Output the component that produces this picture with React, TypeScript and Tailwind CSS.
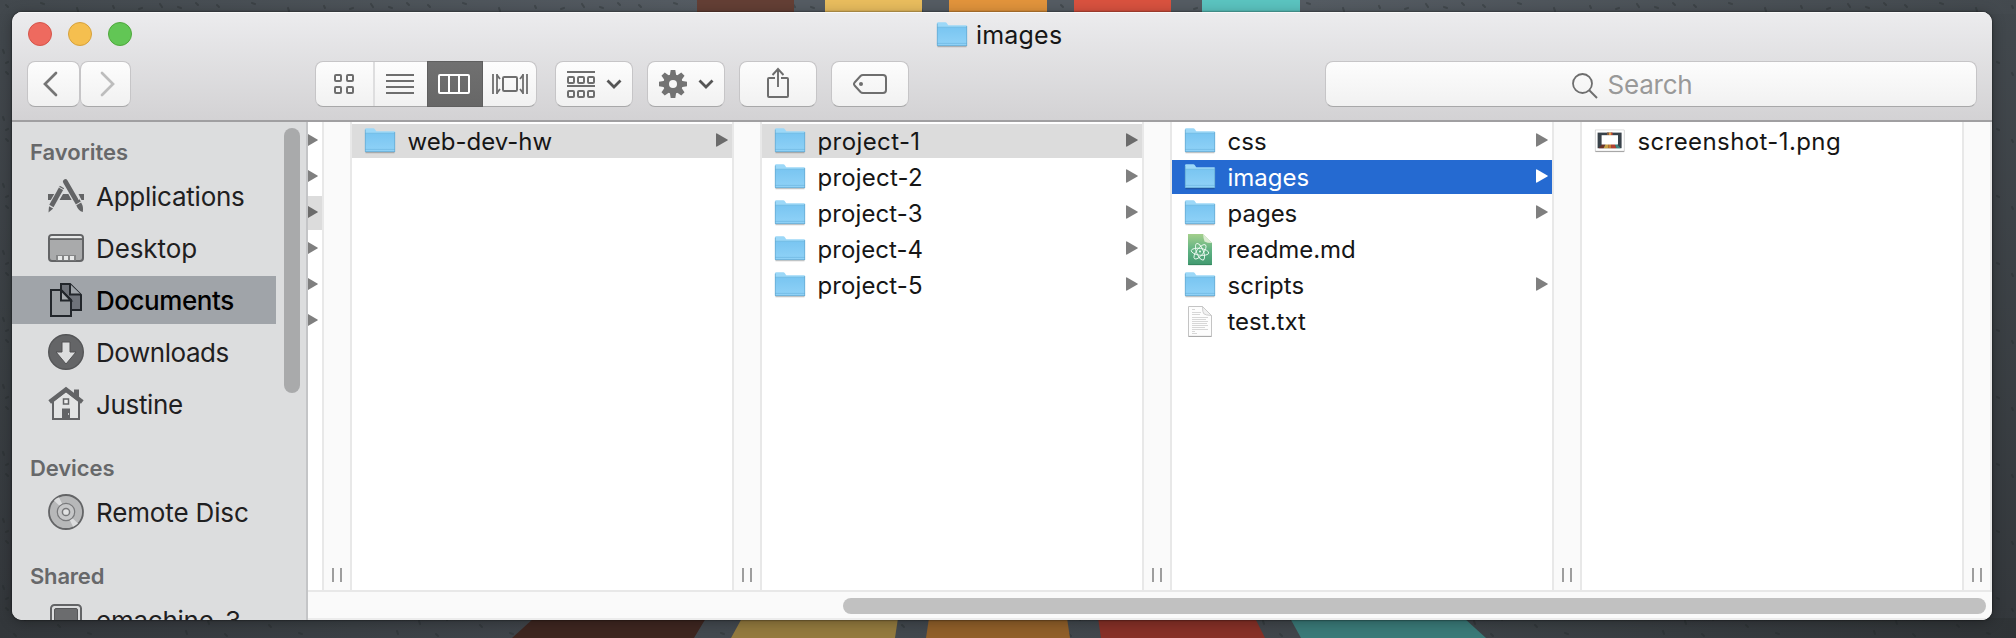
import React from "react";

const ARROW_PATH = "M0 1 Q0 0 1 .4 L11.4 6.4 Q12.3 7 11.4 7.6 L1 13.6 Q0 14 0 13 Z";

function Folder() {
  return (
    <svg width="32" height="26" viewBox="0 0 32 26" className="block shrink-0">
      <defs>
        <linearGradient id="folderFront" x1="0" y1="0" x2="0" y2="1">
          <stop offset="0" stopColor="#79c5f1" />
          <stop offset="1" stopColor="#90d2f7" />
        </linearGradient>
      </defs>
      <path d="M1.5 24.5h29" stroke="#000" strokeOpacity=".22" strokeWidth="1.6" />
      <path d="M1 1.6Q1 .3 2.2.3h7.2q.8 0 1.3.7l1.2 1.8q.4.5 1.1.5h17q1 0 1 1V23q0 .9-.9.9H1.9Q1 23.9 1 23z" fill="#9cd8f8" />
      <path d="M1 5.2h30V23q0 .9-.9.9H1.9Q1 23.9 1 23z" fill="url(#folderFront)" />
      <path d="M1 5.2h30M1 21.4h30" stroke="#68b1dc" strokeWidth=".6" />
      <path d="M1.3 1.6v22M30.7 4v20M1 23.6h30" stroke="#61a5cd" strokeWidth=".7" fill="none" />
    </svg>
  );
}

function MarkdownFile() {
  return (
    <svg width="32" height="34" viewBox="0 0 32 34" className="block shrink-0">
      <defs>
        <linearGradient id="mdPage" x1="0" y1="0" x2="0" y2="1">
          <stop offset="0" stopColor="#a3cf8c" />
          <stop offset=".5" stopColor="#62b384" />
          <stop offset="1" stopColor="#419a70" />
        </linearGradient>
      </defs>
      <path d="M4 2h15l9 9v22H4z" fill="url(#mdPage)" />
      <path d="M19 2l9 9q-5 0-7.500-1.500Q19.500 7 19 2z" fill="#dcebd3" />
      <path d="M4.500 32.700h23" stroke="#317a55" strokeWidth=".7" />
      <g fill="none" stroke="#effaf2" strokeWidth=".9">
        <ellipse cx="16" cy="19.800" rx="8.800" ry="3.400" transform="rotate(8 16 19.800)" />
        <ellipse cx="16" cy="19.800" rx="8.800" ry="3.400" transform="rotate(68 16 19.800)" />
        <ellipse cx="16" cy="19.800" rx="8.800" ry="3.400" transform="rotate(128 16 19.800)" />
      </g>
      <circle cx="16" cy="19.600" r="1" fill="#effaf2" />
    </svg>
  );
}

function TextFile() {
  return (
    <svg width="32" height="34" viewBox="0 0 32 34" className="block shrink-0">
      <path d="M4.500 2.500h14l9 9v20.800h-23z" fill="#fdfdfd" stroke="#c4c4c4" />
      <path d="M4.500 32.500h23" stroke="#aaa" />
      <path d="M18.500 2.500q0 6 1.300 7.300t7.700 1.700z" fill="#f1f1f1" stroke="#c4c4c4" strokeWidth=".8" />
      <path d="M8 5.500h3M8 8.500h9M8 10.500h8M8 13.500h16M8 15.500h14M8 17.500h16M8 19.500h15M8 21.500h16M8 23.500h13M8 25.500h16M8 27.500h3M8 29.500h5" stroke="#d2d2d2" strokeWidth=".9" />
    </svg>
  );
}

function ImageFile() {
  return (
    <svg width="32" height="26" viewBox="0 0 32 26" className="block shrink-0">
      <rect x=".8" y="1.800" width="30" height="22.400" rx="1" fill="#000" fillOpacity=".13" />
      <rect x="1.500" y="22" width="28.600" height="2" fill="#000" fillOpacity=".3" />
      <rect x="1.500" y="2" width="28.600" height="21" fill="#fff" stroke="#ccc" strokeWidth=".5" />
      <rect x="3.600" y="4.600" width="24" height="15.600" fill="#39424a" />
      <path d="M13 4.600h2v3h-2z" fill="#8a5b3c" />
      <path d="M15 4.600h2v3h-2z" fill="#e0a245" />
      <path d="M17 4.600h1.500v3H17z" fill="#c94a35" />
      <path d="M4.600 20.200l4-4.200h2.500l-1.500 4.200z" fill="#6b3228" />
      <path d="M9.600 20.200l2-4.200h2.800v4.200z" fill="#c9a044" />
      <path d="M14.400 16h3v4.200h-3z" fill="#cc7a31" />
      <path d="M17.400 16h3.400l1.600 4.200h-5z" fill="#b5402f" />
      <path d="M20.800 16h2l3.800 4.200h-4.200z" fill="#3f8580" />
      <rect x="7.600" y="7.200" width="16.400" height="9.300" fill="#fff" />
    </svg>
  );
}

type Kind = "folder" | "md" | "txt" | "png";
type Entry = { name: string; kind: Kind; state?: "trail" | "selected"; spacing?: string };

const columns: Entry[][] = [
  [{ name: "web-dev-hw", kind: "folder", state: "trail" }],
  [
    { name: "project-1", kind: "folder", state: "trail", spacing: "tracking-[0.4px]" },
    { name: "project-2", kind: "folder", spacing: "tracking-[0.2px]" },
    { name: "project-3", kind: "folder", spacing: "tracking-[0.1px]" },
    { name: "project-4", kind: "folder", spacing: "tracking-[0.05px]" },
    { name: "project-5", kind: "folder", spacing: "tracking-[0.1px]" },
  ],
  [
    { name: "css", kind: "folder" },
    { name: "images", kind: "folder", state: "selected" },
    { name: "pages", kind: "folder" },
    { name: "readme.md", kind: "md", spacing: "tracking-[-0.05px]" },
    { name: "scripts", kind: "folder" },
    { name: "test.txt", kind: "txt" },
  ],
  [{ name: "screenshot-1.png", kind: "png", spacing: "tracking-[0.4px]" }],
];

function FileIcon({ kind }: { kind: Kind }) {
  if (kind === "md") return <MarkdownFile />;
  if (kind === "txt") return <TextFile />;
  if (kind === "png") return <ImageFile />;
  return <Folder />;
}

function Arrow({ className }: { className: string }) {
  return (
    <svg width="12" height="14" viewBox="0 0 12 14" className={`block shrink-0 ${className}`}>
      <path d={ARROW_PATH} fill="currentColor" />
    </svg>
  );
}

function Row({ entry }: { entry: Entry }) {
  const bg = entry.state === "selected" ? "bg-[#256ad1] text-white" : entry.state === "trail" ? "bg-[#dcdcdc] text-[#161616]" : "text-[#161616]";
  const arrow = entry.state === "selected" ? "text-white" : entry.state === "trail" ? "text-[#6b6b6b]" : "text-[#7f7f7f]";
  return (
    <div className={`flex h-[34px] items-center pr-1 pl-3 ${bg}`}>
      <div className="flex h-[34px] w-8 shrink-0 items-center pb-px">
        <FileIcon kind={entry.kind} />
      </div>
      <span className={`ml-[11.5px] grow pt-0.5 text-[24px] leading-[34px] whitespace-nowrap ${entry.spacing ?? ""}`}>{entry.name}</span>
      {entry.kind === "folder" && <Arrow className={`mb-0.5 ${arrow}`} />}
    </div>
  );
}

function Divider() {
  return (
    <div className="flex w-[30px] shrink-0 items-end justify-center gap-[6px] border-x-2 border-[#e8e8e8] bg-[#fafafa] pb-2">
      <div className="h-[14px] w-0.5 bg-[#9d9d9d]" />
      <div className="h-[14px] w-0.5 bg-[#9d9d9d]" />
    </div>
  );
}

const sideIcon = "block shrink-0";

function ApplicationsIcon() {
  return (
    <svg width="36" height="36" viewBox="0 0 36 36" className={sideIcon}>
      <path d="M0 16h7.500l-3 6H0zM30.500 16H36v6h-2.500zM15 16h6l3 6H11.500z" fill="#636466" />
      <path d="M14.200 9L3.500 28" stroke="#dcddde" strokeWidth="7" />
      <path d="M14 9L3.400 28" stroke="#636466" strokeWidth="4.800" />
      <path d="M1 28.200l4.200 2.200L.5 34.500z" fill="#636466" />
      <path d="M17.300 3.500L29.500 25" stroke="#dcddde" strokeWidth="7" />
      <path d="M17.300 3.500L28 22" stroke="#636466" strokeWidth="4.800" strokeLinecap="round" />
      <path d="M26.500 24l5-2.800 1.300 2.400-5 2.800z" fill="#636466" />
      <path d="M28.300 27.300l4.800-2.700q2.700 4.400 1.700 9.400-4.500-1-6.500-6.700z" fill="#636466" />
      <path d="M11.200 9.400l5 2.700" stroke="#dcddde" strokeWidth="1" />
    </svg>
  );
}

function DesktopIcon() {
  return (
    <svg width="36" height="36" viewBox="0 0 36 36" className={sideIcon}>
      <rect x="1" y="5" width="34" height="26" rx="3" fill="#a9aaab" stroke="#636466" strokeWidth="2" />
      <path d="M2 8.200V8q0-2 2-2h28q2 0 2 2v.2z" fill="#e8e9e9" />
      <path d="M1 9.200h34" stroke="#636466" strokeWidth="1.800" />
      <rect x="8" y="25" width="20" height="5.500" fill="#858687" />
      <path d="M10 26h4v4h-4zM16 26h4v4h-4zM22 26h4v4h-4z" fill="#e8e9e9" />
    </svg>
  );
}

function DocumentsIcon() {
  return (
    <svg width="36" height="36" viewBox="0 0 36 36" className={sideIcon}>
      <path d="M13 2h9l11 11v15H13z" fill="#6f737a" stroke="#22262b" strokeWidth="2" />
      <path d="M22 2v10.500h11" fill="#9ea3a8" stroke="#22262b" strokeWidth="2" />
      <path d="M3 8h10l10 10v16H3z" fill="#999da1" stroke="#22262b" strokeWidth="2" />
      <path d="M13 8v10.500h10z" fill="#a7abaf" stroke="#22262b" strokeWidth="2" />
    </svg>
  );
}

function DownloadsIcon() {
  return (
    <svg width="36" height="36" viewBox="0 0 36 36" className={sideIcon}>
      <circle cx="18" cy="18" r="17.300" fill="#646567" stroke="#545557" strokeWidth="1.400" />
      <path d="M14 8h8v10h6L18 30 8 18h6z" fill="#dcddde" stroke="#505153" strokeWidth="1" />
    </svg>
  );
}

function HomeIcon() {
  return (
    <svg width="36" height="36" viewBox="0 0 36 36" className={sideIcon}>
      <path d="M5 15v18h26V15L18 5z" fill="#e3e4e4" stroke="#636466" strokeWidth="2" />
      <path d="M26 3.500h5v10l-5-4z" fill="#636466" />
      <path d="M1.700 16L18 3.500 34.300 16" fill="none" stroke="#636466" strokeWidth="4.400" />
      <rect x="15.500" y="13" width="5" height="5" fill="#eee" stroke="#636466" strokeWidth="1.500" />
      <path d="M14 22.500h8V34h-8z" fill="#636466" />
      <path d="M20.500 27v2" stroke="#ddd" strokeWidth=".8" />
    </svg>
  );
}

function DiscIcon() {
  return (
    <svg width="36" height="36" viewBox="0 0 36 36" className={sideIcon}>
      <circle cx="18" cy="18" r="17" fill="#b7b8b9" stroke="#636466" strokeWidth="1.800" />
      <path d="M18 18L6 6.500a16 16 0 0 1 5-3.200zM18 18l12 11.500a16 16 0 0 1-5 3.200z" fill="#dcddde" />
      <circle cx="18" cy="18" r="8.700" fill="#c6c7c8" stroke="#77787a" strokeWidth="1.200" />
      <circle cx="18" cy="18" r="3.600" fill="#e2e3e3" stroke="#77787a" strokeWidth="1.500" />
    </svg>
  );
}

function ComputerIcon() {
  return (
    <svg width="36" height="36" viewBox="0 0 36 36" className={sideIcon}>
      <rect x="3" y="3" width="30" height="30" rx="3.500" fill="#dcddde" stroke="#636466" strokeWidth="2" />
      <rect x="6.500" y="6.500" width="23" height="22" rx="1.500" fill="#6b6c6e" stroke="#555658" />
    </svg>
  );
}

function SideItem({ icon, label, active, spacing }: { icon: React.ReactNode; label: string; active?: boolean; spacing: string }) {
  return (
    <div className={`flex h-[48px] w-[264px] shrink-0 items-center pl-9 text-[26px] whitespace-nowrap ${active ? "bg-[#a0a4a9] font-medium text-black" : "text-[#1f2021]"}`}>
      {icon}
      <span className={`ml-3 ${spacing}`}>{label}</span>
    </div>
  );
}

function SideHeading({ children, className }: { children: React.ReactNode; className: string }) {
  return <div className={`shrink-0 pl-[18px] text-[22px] leading-[28px] font-semibold whitespace-nowrap text-[#67686a] ${className}`}>{children}</div>;
}

const button = "flex shrink-0 items-center justify-center rounded-[8px] border border-[#c6c5c7] border-b-[#a8a8a9] bg-linear-to-b from-[#fdfdfd] to-[#f1f1f1]";

function Chevron() {
  return (
    <svg width="16" height="10" viewBox="0 0 16 10" className="block">
      <path d="M1.500 1.500L8 8l6.500-6.500" fill="none" stroke="#555" strokeWidth="2.800" />
    </svg>
  );
}

function GearIcon() {
  return (
    <svg width="28" height="28" viewBox="-14 -14 28 28" className="block">
      <g fill="#737373">
        {[0, 45, 90, 135].map((a) => (
          <path key={a} d="M-2.300-14h4.600l1 6v16l-1 6h-4.600l-1-6V-8z" transform={`rotate(${a})`} />
        ))}
        <circle r="9.800" />
      </g>
      <circle r="4" fill="#f7f7f7" />
    </svg>
  );
}

const lights = ["bg-[#ee6a5f] border-[#d5544a]", "bg-[#f5bf4f] border-[#d6a13c]", "bg-[#62c655] border-[#4fa73c]"];

export default function App() {
  return (
    <div className="relative h-[638px] w-[2016px] overflow-hidden bg-[#3d4247] p-3 font-['Inter','Liberation_Sans',sans-serif]">
      <svg width="2016" height="638" viewBox="0 0 2016 638" className="absolute top-0 left-0">
        <defs>
          <linearGradient id="deskTop" x1="0" y1="0" x2="1" y2="0">
            <stop offset="0" stopColor="#42484d" />
            <stop offset=".35" stopColor="#555c63" />
            <stop offset=".65" stopColor="#555c63" />
            <stop offset="1" stopColor="#43494e" />
          </linearGradient>
          <linearGradient id="deskBottom" x1="0" y1="0" x2="1" y2="0">
            <stop offset="0" stopColor="#33373b" />
            <stop offset=".35" stopColor="#43494f" />
            <stop offset=".65" stopColor="#40464b" />
            <stop offset="1" stopColor="#2f3336" />
          </linearGradient>
          <linearGradient id="deskSide" x1="0" y1="0" x2="0" y2="1">
            <stop offset="0" stopColor="#42484d" />
            <stop offset="1" stopColor="#33373b" />
          </linearGradient>
          <pattern id="specks" width="211" height="67" patternUnits="userSpaceOnUse">
            <path d="M6 5l2 2M24 14l1 3M41 3l3 1M58 22l2 2M77 8l1 3M88 30l3 1M14 31l2 2M35 53l1 3M66 36l2 1M3 50l1 3M113 6l1 2M127 40l2 1M139 9l3-1M152 55l1 3M160 4l2 3M178 7l3 1M186 28l1 3M196 3l2 2M203 47l2 2M208 18l1 3M6 63l2-1M98 62l2 1" stroke="#1f2326" strokeOpacity=".3" strokeWidth="2.200" strokeLinecap="round" />
          </pattern>
        </defs>
        <rect width="2016" height="638" fill="url(#deskSide)" />
        <rect width="2016" height="14" fill="url(#deskTop)" />
        <rect y="618" width="2016" height="20" fill="url(#deskBottom)" />
        <rect width="2016" height="638" fill="url(#specks)" />
        <path d="M697 0h97v14h-97z" fill="#643f35" />
        <path d="M825 0h97v14h-97z" fill="#e9bd5e" />
        <path d="M949 0h98v14h-98z" fill="#e2943c" />
        <path d="M1074 0h97v14h-97z" fill="#d9523f" />
        <path d="M1202 0h98v14h-98z" fill="#5bc4c0" />
        <path d="M534 618h172l-12 20H512z" fill="#3e2620" />
        <path d="M742 618h156l-3 20H731z" fill="#937a3e" />
        <path d="M929 618h138l3 20H926z" fill="#905f29" />
        <path d="M1098 618h157l10 20h-164z" fill="#873027" />
        <path d="M1290 618h174l22 20h-185z" fill="#3a7a78" />
      </svg>

      <div className="relative flex h-[608px] w-[1980px] flex-col overflow-hidden rounded-[10px] bg-white shadow-[0_0_2px_rgba(0,0,0,0.8),0_2px_14px_rgba(0,0,0,0.3)]">
        <header className="flex h-[110px] shrink-0 flex-col border-b-2 border-b-[#a09fa1] bg-linear-to-b from-[#ececee] to-[#d3d2d4] shadow-[inset_0_1px_0_#f8f8f8]">
          <div className="flex h-[49px] shrink-0 items-center px-4">
            <div className="flex w-[400px] gap-4 pb-[5px]">
              {lights.map((c) => (
                <div key={c} className={`size-6 rounded-full border ${c}`} />
              ))}
            </div>
            <div className="ml-[508px] flex items-center gap-2 pb-1">
              <Folder />
              <span className="text-[25px] leading-[34px] tracking-[0.2px] text-[#161616]">images</span>
            </div>
          </div>
          <div className="flex h-[46px] shrink-0 pl-[15px]">
            <div className={`h-[46px] w-[53px] ${button}`}>
              <svg width="16" height="26" viewBox="0 0 16 26" className="-ml-2 block">
                <path d="M14 2L3 13l11 11" fill="none" stroke="#757575" strokeWidth="2.700" strokeLinecap="round" />
              </svg>
            </div>
            <div className={`h-[46px] w-[51px] ${button}`}>
              <svg width="16" height="26" viewBox="0 0 16 26" className="ml-1 block">
                <path d="M2 2l11 11L2 24" fill="none" stroke="#bdbdbd" strokeWidth="2.700" strokeLinecap="round" />
              </svg>
            </div>
            <div className={`ml-[184px] h-[46px] w-[222px] ${button}`}>
              <div className="flex h-full w-[59px] shrink-0 items-center justify-center border-r-2 border-[#dededf] pr-px">
                <svg width="20" height="20" viewBox="0 0 20 20">
                  <g fill="none" stroke="#6e6e6e" strokeWidth="2">
                    <rect x="1" y="1" width="6" height="6" rx="1" />
                    <rect x="13" y="1" width="6" height="6" rx="1" />
                    <rect x="1" y="13" width="6" height="6" rx="1" />
                    <rect x="13" y="13" width="6" height="6" rx="1" />
                  </g>
                </svg>
              </div>
              <div className="flex h-full w-[52px] shrink-0 items-center justify-center pr-0.5">
                <svg width="28" height="20" viewBox="0 0 28 20">
                  <path d="M0 1h28M0 7h28M0 13h28M0 19h28" stroke="#6e6e6e" strokeWidth="2" />
                </svg>
              </div>
              <div className="flex h-[46px] w-[56px] shrink-0 items-center justify-center border border-[#5f5f5f] bg-linear-to-b from-[#707070] to-[#676767] pr-0.5">
                <svg width="32" height="20" viewBox="0 0 32 20">
                  <path d="M2 1h28q1 0 1 1v16q0 1-1 1H2q-1 0-1-1V2q0-1 1-1zM11 1v18M21 1v18" fill="none" stroke="#fff" strokeWidth="2" />
                </svg>
              </div>
              <div className="flex h-full w-[53px] shrink-0 items-center justify-center">
                <svg width="36" height="20" viewBox="0 0 36 20">
                  <rect x="11" y="3" width="14" height="14" rx="1.200" fill="none" stroke="#6e6e6e" strokeWidth="2" />
                  <path d="M1 0v20M35 0v20" stroke="#6e6e6e" strokeWidth="1.800" />
                  <path d="M5 0v20M31 0v20" stroke="#6e6e6e" strokeWidth="1.800" />
                  <path d="M5 1l3 4M5 19l3-4M31 1l-3 4M31 19l-3-4" stroke="#6e6e6e" strokeWidth="1.800" />
                </svg>
              </div>
            </div>
            <div className={`ml-[18px] h-[46px] w-[78px] gap-[11px] pl-px ${button}`}>
              <svg width="28" height="27" viewBox="0 0 28 27">
                <path d="M0 1h28M0 15h28" stroke="#6e6e6e" strokeWidth="2" />
                <g fill="none" stroke="#6e6e6e" strokeWidth="2">
                  <rect x="1" y="6" width="6" height="6" rx="1" />
                  <rect x="11" y="6" width="6" height="6" rx="1" />
                  <rect x="21" y="6" width="6" height="6" rx="1" />
                  <rect x="1" y="20" width="6" height="6" rx="1" />
                  <rect x="11" y="20" width="6" height="6" rx="1" />
                  <rect x="21" y="20" width="6" height="6" rx="1" />
                </g>
              </svg>
              <Chevron />
            </div>
            <div className={`ml-[14px] h-[46px] w-[78px] gap-[11px] pl-px ${button}`}>
              <GearIcon />
              <Chevron />
            </div>
            <div className={`ml-[14px] h-[46px] w-[78px] ${button}`}>
              <svg width="22" height="32" viewBox="0 0 22 32" className="mb-[3px] block">
                <path d="M8 11H2q-1 0-1 1v17q0 1 1 1h18q1 0 1-1V12q0-1-1-1h-6" fill="none" stroke="#6e6e6e" strokeWidth="2" />
                <path d="M11 20V2M5.500 8L11 2l5.500 6" fill="none" stroke="#6e6e6e" strokeWidth="1.900" />
              </svg>
            </div>
            <div className={`ml-[14px] h-[46px] w-[78px] ${button}`}>
              <svg width="34" height="20" viewBox="0 0 34 20" className="block">
                <path d="M10 1h20q3 0 3 3v12q0 3-3 3H10q-1.500 0-2.500-1L1.600 11.500q-1.200-1.500 0-3L7.500 2Q8.500 1 10 1z" fill="none" stroke="#6e6e6e" strokeWidth="2" />
                <circle cx="8" cy="10" r="2" fill="#6e6e6e" />
              </svg>
            </div>
            <div className={`ml-[416px] h-[46px] w-[652px] pr-[37px] ${button}`}>
              <svg width="26" height="26" viewBox="0 0 26 26" className="mt-1 block">
                <circle cx="10.500" cy="10.500" r="9.500" fill="none" stroke="#6e6e6e" strokeWidth="1.800" />
                <path d="M17 17l8 8" stroke="#6e6e6e" strokeWidth="2" />
              </svg>
              <span className="ml-[9px] text-[26px] tracking-[-0.2px] text-[#999]">Search</span>
            </div>
          </div>
        </header>

        <div className="flex h-[498px]">
          <aside className="flex h-full w-[296px] shrink-0 overflow-hidden border-r-2 border-[#c4c5c7] bg-[#dcddde]">
            <nav className="flex w-[272px] shrink-0 flex-col">
              <SideHeading className="mt-4">Favorites</SideHeading>
              <div className="mt-[6px] flex flex-col gap-1">
                <SideItem icon={<ApplicationsIcon />} label="Applications" spacing="tracking-[-0.25px]" />
                <SideItem icon={<DesktopIcon />} label="Desktop" spacing="tracking-[-0.1px]" />
                <SideItem icon={<DocumentsIcon />} label="Documents" active spacing="tracking-[-0.45px]" />
                <SideItem icon={<DownloadsIcon />} label="Downloads" spacing="tracking-[-0.45px]" />
                <SideItem icon={<HomeIcon />} label="Justine" spacing="tracking-[-0.35px]" />
              </div>
              <SideHeading className="mt-[26px] tracking-[-0.1px]">Devices</SideHeading>
              <div className="mt-[6px]">
                <SideItem icon={<DiscIcon />} label="Remote Disc" spacing="tracking-[-0.15px]" />
              </div>
              <SideHeading className="mt-[26px] tracking-[-0.2px]">Shared</SideHeading>
              <div className="mt-[6px]">
                <SideItem icon={<ComputerIcon />} label="emachine-3" spacing="tracking-[-0.25px]" />
              </div>
            </nav>
            <div className="mt-[6px] h-[265px] w-4 shrink-0 rounded-full bg-[#a9aaab]" />
          </aside>

          <main className="flex min-w-0 grow flex-col">
            <div className="flex h-[468px] overflow-hidden">
              <div className="flex w-[14px] shrink-0 flex-col gap-0.5 pt-0.5">
                {[0, 1, 2, 3, 4, 5].map((i) => (
                  <div key={i} className={`flex h-[34px] items-center overflow-hidden ${i === 2 ? "bg-[#dcdcdc] text-[#6b6b6b]" : "text-[#7f7f7f]"}`}>
                    <Arrow className="mb-0.5 -ml-0.5" />
                  </div>
                ))}
              </div>
              <Divider />
              {columns.map((col, i) => (
                <React.Fragment key={i}>
                  <div className="flex w-[380px] shrink-0 flex-col gap-0.5 pt-0.5">
                    {col.map((e) => (
                      <Row key={e.name} entry={e} />
                    ))}
                  </div>
                  <Divider />
                </React.Fragment>
              ))}
            </div>
            <div className="flex h-[30px] shrink-0 items-center justify-end border-y-2 border-t-[#e8e8e8] border-b-[#ececec] bg-[#fafafa] pt-0.5 pr-[6px]">
              <div className="h-4 w-[1143px] rounded-full bg-[#c1c1c1]" />
            </div>
          </main>
        </div>
      </div>
    </div>
  );
}
